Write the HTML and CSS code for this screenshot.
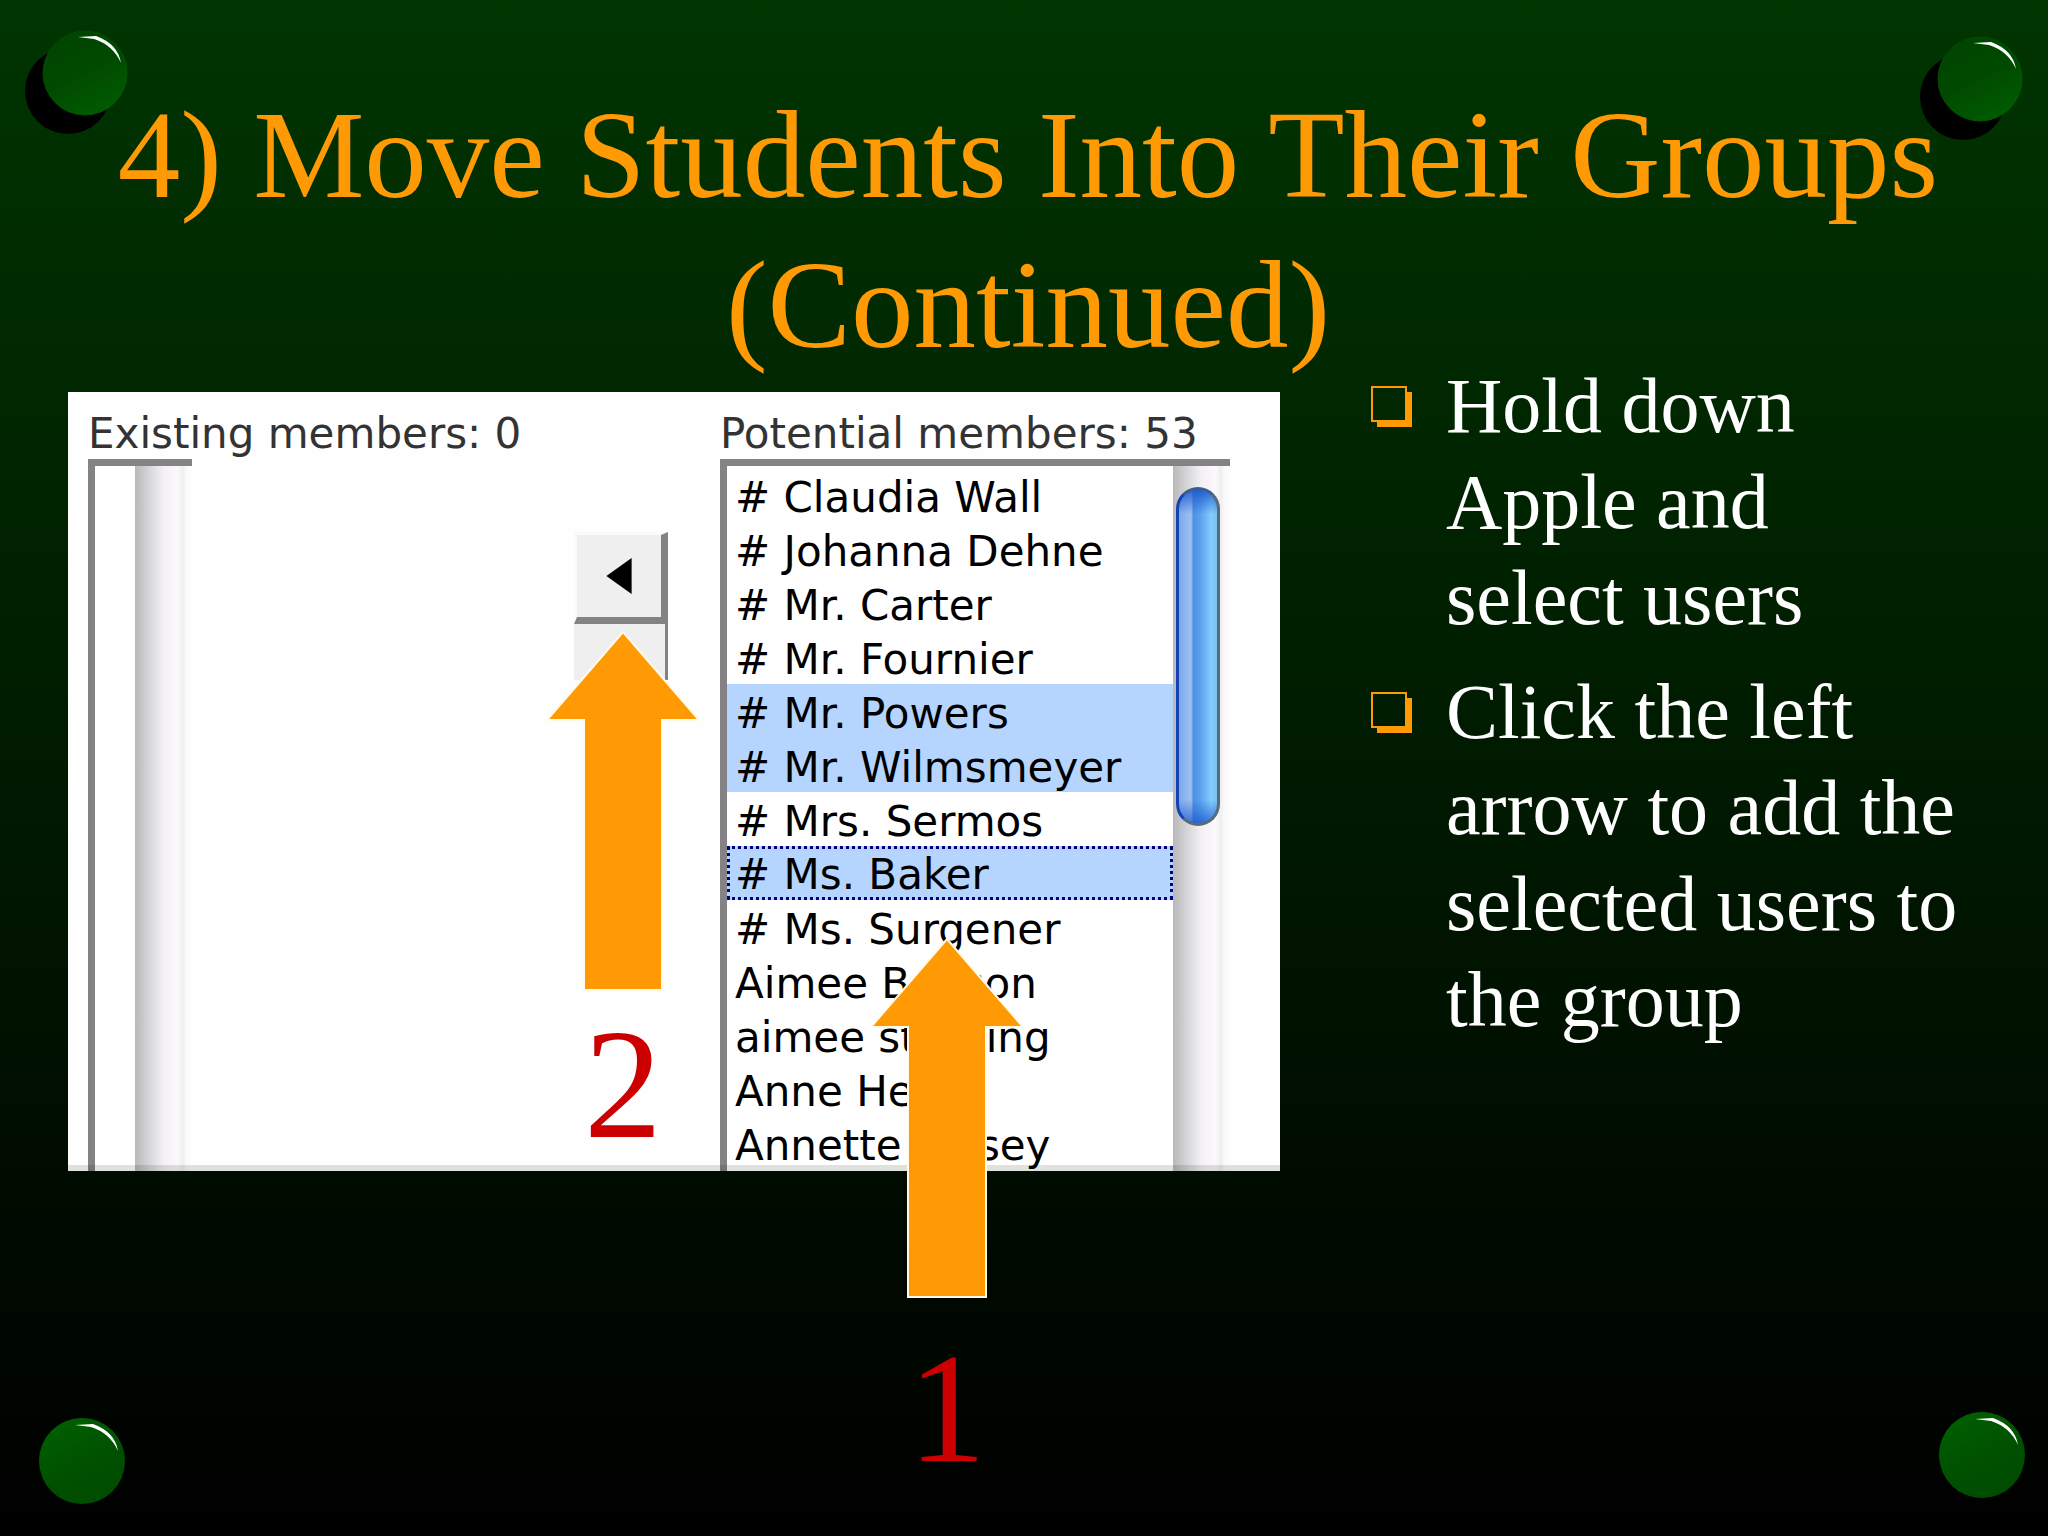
FILE: index.html
```html
<!DOCTYPE html>
<html lang="en">
<head>
<meta charset="utf-8">
<title>Move Students Into Their Groups</title>
<link rel="stylesheet" href="styles.css">
</head>
<body>
<svg class="defs" aria-hidden="true">
  <defs>
    <linearGradient id="orb-top" x1="0.2" y1="0" x2="0.7" y2="1">
      <stop offset="0" stop-color="#004400"/>
      <stop offset="0.5" stop-color="#004a00"/>
      <stop offset="1" stop-color="#005c00"/>
    </linearGradient>
    <linearGradient id="orb-bottom" x1="0.2" y1="0" x2="0.7" y2="1">
      <stop offset="0" stop-color="#006000"/>
      <stop offset="0.6" stop-color="#005000"/>
      <stop offset="1" stop-color="#004c00"/>
    </linearGradient>
    <linearGradient id="orb-rim" x1="0" y1="0" x2="1" y2="1">
      <stop offset="0" stop-color="#004400"/>
      <stop offset="1" stop-color="#005c00"/>
    </linearGradient>
    <symbol id="arrow" viewBox="0 0 156 364">
      <path d="M78 2 L154 90 H117 V360 H39 V90 H2Z" fill="#ff9a05" stroke="#fffbe8" stroke-width="2"/>
    </symbol>
  </defs>
</svg>

<div class="slide">
  <svg class="orb orb-tl" viewBox="0 0 104 104" aria-hidden="true">
    <circle cx="43" cy="61" r="43"/>
    <circle cx="60" cy="43" r="42" fill="url(#orb-top)" stroke="url(#orb-rim)"/>
    <path d="M53 7 L71 6 Q93 14 96 33 Q88 15 69 9Z" fill="#fff"/>
  </svg>
  <svg class="orb orb-tr" viewBox="0 0 104 104" aria-hidden="true">
    <circle cx="43" cy="61" r="43"/>
    <circle cx="60" cy="43" r="42" fill="url(#orb-top)" stroke="url(#orb-rim)"/>
    <path d="M53 7 L71 6 Q93 14 96 33 Q88 15 69 9Z" fill="#fff"/>
  </svg>
  <svg class="orb orb-bl" viewBox="0 0 104 104" aria-hidden="true">
    <circle cx="60" cy="43" r="43" fill="url(#orb-bottom)"/>
    <path d="M53 7 L71 6 Q93 14 96 33 Q88 15 69 9Z" fill="#fff"/>
  </svg>
  <svg class="orb orb-br" viewBox="0 0 104 104" aria-hidden="true">
    <circle cx="60" cy="43" r="43" fill="url(#orb-bottom)"/>
    <path d="M53 7 L71 6 Q93 14 96 33 Q88 15 69 9Z" fill="#fff"/>
  </svg>

  <h1 class="title">4) Move Students Into Their Groups (Continued)</h1>

  <main class="content">
    <div class="figure">
      <div class="panel">
        <div class="members existing">
          <label class="caption" for="existing">Existing members: 0</label>
          <div class="listbox listbox-empty">
            <select class="list" id="existing" multiple size="14"></select>
            <div class="track"></div>
          </div>
        </div>
        <div class="buttons">
          <button class="move" type="button" aria-label="Add selected users">
            <svg class="move-icon" viewBox="0 0 28 40" aria-hidden="true"><path d="M0 20 L28 0 V40Z"/></svg>
          </button>
          <button class="move move-back" type="button" aria-label="Remove selected users"></button>
        </div>
        <div class="members potential">
          <label class="caption" for="potential">Potential members: 53</label>
          <div class="listbox">
            <select class="list" id="potential" multiple size="13">
              <option># Claudia Wall</option>
              <option># Johanna Dehne</option>
              <option># Mr. Carter</option>
              <option># Mr. Fournier</option>
              <option selected># Mr. Powers</option>
              <option selected># Mr. Wilmsmeyer</option>
              <option># Mrs. Sermos</option>
              <option class="current" selected># Ms. Baker</option>
              <option># Ms. Surgener</option>
              <option>Aimee Benson</option>
              <option>aimee sterning</option>
              <option>Anne Hess</option>
              <option>Annette Kelsey</option>
            </select>
            <div class="track"><div class="thumb"></div></div>
          </div>
        </div>
      </div>
      <div class="callout callout-two">
        <svg class="arrow" aria-hidden="true"><use href="#arrow"/></svg>
        <span class="number">2</span>
      </div>
      <div class="callout callout-one">
        <svg class="arrow" aria-hidden="true"><use href="#arrow"/></svg>
        <span class="number">1</span>
      </div>
    </div>

    <ul class="steps">
      <li class="step">
        <svg class="bullet" viewBox="0 0 42 42" aria-hidden="true"><path d="M36 6 H41 V41 H6 V36 H36Z" fill="#ff9a05"/><path d="M1 1 H35 V35 H1Z" fill="none" stroke="#ff9a05" stroke-width="2"/></svg>
        <span class="step-text">Hold down Apple and select users</span>
      </li>
      <li class="step">
        <svg class="bullet" viewBox="0 0 42 42" aria-hidden="true"><path d="M36 6 H41 V41 H6 V36 H36Z" fill="#ff9a05"/><path d="M1 1 H35 V35 H1Z" fill="none" stroke="#ff9a05" stroke-width="2"/></svg>
        <span class="step-text">Click the left arrow to add the selected users to the group</span>
      </li>
    </ul>
  </main>
</div>
</body>
</html>
```

FILE: styles.css
```css
* {
  box-sizing: border-box;
}

body {
  margin: 0;
  background: #000;
  font-family: "Liberation Serif", "Times New Roman", serif;
}

.defs {
  position: absolute;
  width: 0;
  height: 0;
}

.slide {
  position: relative;
  min-height: 100vh;
  padding-top: 80px;
  background: linear-gradient(#003500, #000);
  overflow: hidden;
}

/* Corner studs */
.orb {
  position: absolute;
  width: 104px;
  height: 104px;
}

.orb-tl { left: 25px; top: 30px; }
.orb-tr { right: 24px; top: 36px; }
.orb-bl { left: 22px; bottom: 14px; }
.orb-br { right: 22px; bottom: 20px; }

.title {
  position: relative;
  margin: 0;
  padding: 0 100px 0 108px;
  color: #ff9a05;
  font-size: 125px;
  font-weight: 400;
  line-height: 150px;
  text-align: center;
}

.content {
  display: grid;
  grid-template-columns: minmax(0, 1212fr) minmax(0, 589fr);
  column-gap: 91px;
  align-items: start;
  padding: 0 88px 0 68px;
}

/* Members dialog */
.figure {
  position: relative;
  margin-top: 12px;
}

.panel {
  display: grid;
  grid-template-columns: 486px 146px 1fr;
  height: 779px;
  padding: 16px 50px 0 20px;
  background: #fefefe;
  overflow: hidden;
  font-family: "DejaVu Sans", Verdana, sans-serif;
}

.panel::after {
  content: "";
  position: absolute;
  right: 0;
  bottom: 0;
  left: 0;
  height: 6px;
  background: rgba(0, 20, 0, 0.12);
}

.members {
  display: flex;
  flex-direction: column;
}

.caption {
  height: 51px;
  color: #333;
  font-size: 42px;
  line-height: 52px;
  white-space: nowrap;
}

.listbox {
  display: flex;
  height: 712px;
  border-top: 7px solid #848284;
  border-left: 7px solid #848284;
}

.listbox-empty {
  width: 104px;
}

.list {
  flex: 1;
  min-width: 0;
  height: 712px;
  margin: 0;
  padding: 2px 0 0;
  border: 0;
  border-radius: 0;
  outline: 0;
  background: #fff;
  color: #000;
  font-family: inherit;
  font-size: 42px;
  overflow: hidden;
}

.list option {
  height: 54px;
  min-height: 54px;
  padding: 5px 8px 0;
  line-height: 49px;
  color: #000;
}

.list option:checked {
  background: #b5d5ff linear-gradient(#b5d5ff, #b5d5ff);
  color: #000;
}

.list .current {
  border: 3px dotted #000080;
  padding: 1px 5px 0;
}

.track {
  flex: none;
  width: 57px;
  padding: 21px 10px 0 3px;
  background: linear-gradient(90deg, #b8b7b9, #d6d5d7 25%, #f3f1f4 50%, #fbf9fc 75%, #efedf0 84%, #fbfafb 90%, #fefefe);
}

.thumb {
  height: 339px;
  border: 3px solid #566b7c;
  border-top-color: #3b5d8e;
  border-left-color: #1443b4;
  border-radius: 22px;
  background:
    linear-gradient(rgba(20, 80, 200, 0.8), rgba(20, 80, 200, 0) 24px, rgba(20, 80, 200, 0) 310px, rgba(20, 80, 200, 0.7)),
    linear-gradient(90deg, #7da9ea, #9cc0f4 32%, #4f90e2 38%, #5a9fee 55%, #82ccff 85%, #7cc0ee);
}

.buttons {
  padding-top: 124px;
}

.move {
  display: flex;
  align-items: center;
  justify-content: center;
  width: 94px;
  height: 92px;
  margin: 0;
  padding: 0;
  border: solid;
  border-width: 3px 7px 7px 3px;
  border-color: #fafafa #848284 #848284 #fafafa;
  background: #f0eff0;
}

.move-icon {
  width: 28px;
  height: 36px;
}

.move-back {
  height: 56px;
  border-width: 0 3px 0 0;
}

/* Numbered arrows over the dialog */
.callout {
  position: absolute;
  z-index: 1;
  display: flex;
  flex-direction: column;
  align-items: center;
  width: 156px;
}

.callout-two { left: 477px; top: 238px; gap: 5px; }
.callout-one { left: 801px; top: 545px; gap: 22px; }

.arrow {
  width: 156px;
  height: 364px;
}

.number {
  color: #c00;
  font-size: 156px;
  line-height: 172px;
}

/* Instructions */
.steps {
  display: flex;
  flex-direction: column;
  gap: 18px;
  margin: -22px 0 0;
  padding: 0;
  list-style: none;
}

.step {
  display: flex;
  align-items: flex-start;
  gap: 33px;
}

.bullet {
  flex: none;
  width: 42px;
  height: 42px;
  margin-top: 28px;
}

.step-text {
  flex: 1;
  color: #fff;
  font-size: 78px;
  line-height: 96px;
}
```
